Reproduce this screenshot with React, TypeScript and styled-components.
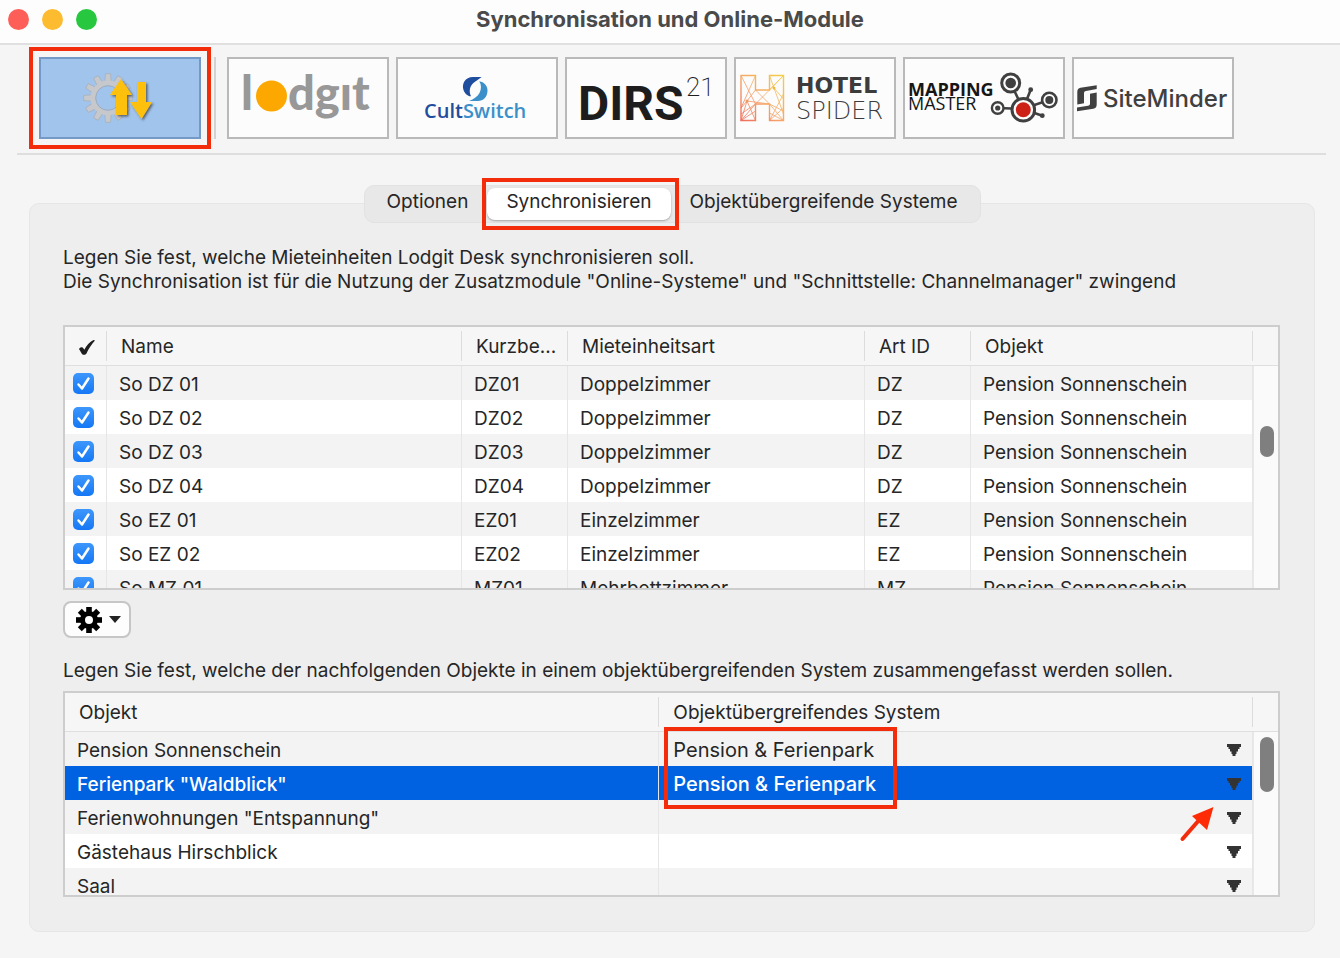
import React from "react";
import styled, { createGlobalStyle, css } from "styled-components";

const GlobalStyle = createGlobalStyle`
  *, *::before, *::after { box-sizing: border-box; }
  body {
    margin: 0;
    background: #f5f5f5;
    color: #262626;
    font-family: Inter, "Liberation Sans", sans-serif;
    font-size: 19px;
    line-height: 24px;
  }
  button, input, select { font: inherit; color: inherit; margin: 0; }
`;

const RED = "#f32d0c";

const Window = styled.main`
  min-height: 100vh;
  padding-bottom: 26px;
`;

const TitleBar = styled.header`
  display: grid;
  grid-template-columns: 1fr auto 1fr;
  align-items: center;
  height: 45px;
  padding: 0 8px 5px;
  background: #fdfdfd;
  border-bottom: 2px solid #e0e0e0;
`;

const Lights = styled.div`
  display: flex;
  gap: 13px;
`;

const Light = styled.button<{ $color: string }>`
  width: 21px;
  height: 21px;
  padding: 0;
  border: 0;
  border-radius: 50%;
  background: ${(p) => p.$color};
`;

const Title = styled.h1`
  margin: 0;
  font-size: 22px;
  line-height: 28px;
  font-weight: 700;
  color: #4a4a4a;
`;

const Toolbar = styled.nav`
  display: flex;
  gap: 7px;
  margin: 0 14px 0 17px;
  padding: 12px 0 14px 22px;
  border-bottom: 2px solid #dedede;
`;

const Divider = styled.span`
  width: 2px;
  margin: 0 4px 0 6px;
  background: #d2d2d2;
`;

const Marker = styled.span`
  position: absolute;
  z-index: 2;
  border: 4px solid ${RED};
  pointer-events: none;
`;

const ModuleMarker = styled(Marker)`
  inset: -12px;
`;

const TabMarker = styled(Marker)`
  inset: -10px -8px -10px -5px;
`;

const SystemMarker = styled(Marker)`
  top: -5px;
  left: 5px;
  width: 233px;
  height: 82px;
`;

const ModuleButton = styled.button<{ $active?: boolean }>`
  position: relative;
  flex: none;
  width: 162px;
  height: 82px;
  padding: 0;
  border: 2px solid ${(p) => (p.$active ? "#7599c6" : "#b9b9b9")};
  background: ${(p) => (p.$active ? "#a1c4ed" : "#fcfcfc")};

  > svg { display: block; }
`;

const TabView = styled.div`
  margin: 30px 25px 0 29px;
`;

const Tabs = styled.div`
  position: relative;
  z-index: 1;
  display: flex;
  width: max-content;
  height: 38px;
  margin: 0 auto -20px;
  padding: 2px 3px;
  border: 1px solid #e2e2e2;
  border-radius: 10px;
  background: #e8e8e8;
`;

const Tab = styled.button<{ $active?: boolean }>`
  position: relative;
  padding: 0 19px 4px;
  border: 0;
  border-radius: 8px;
  background: transparent;
  ${(p) =>
    p.$active &&
    css`
      background: #fff;
      box-shadow: 0 1px 2px rgba(0, 0, 0, 0.3);
    `}
`;

const Panel = styled.section`
  padding: 42px 34px 34px 33px;
  border: 1px solid #e6e6e6;
  border-radius: 10px;
  background: #eeeeee;
`;

const Note = styled.p<{ $gap: number }>`
  margin: 0 0 ${(p) => p.$gap}px;
`;

const TableBox = styled.div<{ $height: number }>`
  position: relative;
  height: ${(p) => p.$height}px;
  overflow: hidden;
  border: 2px solid #cdcdcd;
  background: #fff;
`;

const Grid = styled.table`
  width: 100%;
  table-layout: fixed;
  border-collapse: separate;
  border-spacing: 0;
`;

const Head = styled.th<{ $last?: boolean }>`
  height: 39px;
  padding: 0;
  border-bottom: 1px solid #dfdfdf;
  background: #f6f6f6;
  font-weight: 400;
  text-align: left;
  white-space: nowrap;

  > span {
    display: flex;
    align-items: center;
    height: 30px;
    padding: 2px 0 0 14px;
    border-right: ${(p) => (p.$last ? 0 : 1)}px solid #dcdcdc;
  }
`;

const Cell = styled.td`
  position: relative;
  height: 34px;
  padding: 3px 0 0 12px;
  border-right: 1px solid #e6e6e6;
  white-space: nowrap;
`;

const TickCell = styled(Cell)`
  padding: 0 0 0 8px;
`;

const SelectCell = styled(Cell)`
  padding: 0;
`;

const Row = styled.tr<{ $selected?: boolean }>`
  background: #fff;
  &:nth-child(odd) { background: #f3f3f3; }
  ${(p) =>
    p.$selected &&
    css`
      && { background: #0062e0; }
      color: #fff;
      font-weight: 500;
    `}
`;

const Track = styled.div`
  position: absolute;
  top: 39px;
  right: 0;
  bottom: 0;
  width: 25px;
  border-left: 1px solid #e8e8e8;
  background: #fafafa;
`;

const Thumb = styled.div<{ $top: number; $height: number }>`
  width: 14px;
  height: ${(p) => p.$height}px;
  margin: ${(p) => p.$top}px 0 0 6px;
  border-radius: 7px;
  background: #7f7f7f;
`;

const Tick = styled.label`
  display: grid;
  width: 21px;
  height: 21px;

  > * { grid-area: 1 / 1; }
  > svg { pointer-events: none; }
`;

const TickInput = styled.input`
  appearance: none;
  width: 21px;
  height: 21px;
  border-radius: 5px;
  background: linear-gradient(#3d97fb, #1577f5);
`;

const Picker = styled.label`
  display: grid;
  align-items: center;

  > * { grid-area: 1 / 1; }
  > svg { justify-self: end; margin: 2px 11px 0 0; pointer-events: none; }
`;

const PickerSelect = styled.select`
  appearance: none;
  width: 100%;
  height: 34px;
  padding: 2px 36px 0 14px;
  border: 0;
  border-radius: 0;
  background: transparent;
  font-size: 20px;
`;

const Pointer = styled.svg`
  position: absolute;
  top: 6px;
  right: 37px;
`;

const ActionButton = styled.button`
  display: flex;
  align-items: center;
  gap: 6px;
  height: 37px;
  margin: 11px 0 21px;
  padding: 0 7px 0 11px;
  border: 2px solid #c6c6c6;
  border-radius: 8px;
  background: #fdfdfd;
`;

const teeth = (n: number) => Array.from({ length: n }, (_, i) => (360 / n) * i);

const SyncIcon = () => (
  <svg width="158" height="78" viewBox="0 0 158 78" aria-hidden="true">
    <defs>
      <filter id="drop" x="-20%" y="-20%" width="150%" height="150%">
        <feDropShadow dx="1.5" dy="1.5" stdDeviation="1.3" floodColor="#333" floodOpacity="0.7" />
      </filter>
    </defs>
    <g transform="translate(67 39)">
      {teeth(12).map((a) => (
        <path key={a} d="M-3.2-16L-2.6-24.3H2.6L3.2-16z" fill="#c6c8cb" stroke="#a5adb8" strokeWidth=".7" transform={`rotate(${a})`} />
      ))}
      <circle r="15" fill="none" stroke="#c6c8cb" strokeWidth="5" />
      <circle r="12.3" fill="none" stroke="#9fabbb" strokeWidth="1" />
    </g>
    <g fill="#fdc00b" filter="url(#drop)">
      <path d="M80 20L91 36H86V56H75V36H69z" />
      <path d="M96 23H105V43H111L100.500 60L89 43H96z" />
    </g>
  </svg>
);

const LodgitLogo = () => (
  <svg width="158" height="78" viewBox="0 0 158 78" role="img" aria-label="lodgit">
    <g fill="#989898" fontFamily="Lato, sans-serif" fontWeight="900" fontSize="47">
      <text x="12" y="51">l</text>
      <text x="59" y="51">dgıt</text>
    </g>
    <circle cx="42.500" cy="37" r="15.500" fill="#fca800" />
  </svg>
);

const CultSwitchLogo = () => (
  <svg width="158" height="78" viewBox="0 0 158 78" role="img" aria-label="CultSwitch">
    <path d="M83.700 18H75C67 18 63.500 25 65.500 31C67 35 70 37.500 73 37.300C70.500 32 72 26.500 76 23.500z" fill="#1f4e9f" />
    <path d="M81.300 22.300C86 23 89.700 27 89.500 31.500C89.500 38 85 42 80 42H71C76 40 79.500 37.500 81.500 34C83.500 30 83.500 26 81.300 22.300z" fill="#3b90c9" />
    <text x="26" y="59" fontFamily="'Open Sans', sans-serif" fontWeight="600" fontSize="20">
      <tspan fill="#1f4e9f">Cult</tspan>
      <tspan fill="#3b90c9">Switch</tspan>
    </text>
  </svg>
);

const DirsLogo = () => (
  <svg width="158" height="78" viewBox="0 0 158 78" role="img" aria-label="DIRS 21">
    <g fill="#1d1d1d" fontFamily="Roboto, sans-serif">
      <text x="11" y="61" fontWeight="700" fontSize="48">DIRS</text>
      <text x="119" y="37" fontWeight="200" fontSize="26">21</text>
    </g>
  </svg>
);

const HotelSpiderLogo = () => (
  <svg width="158" height="78" viewBox="0 0 158 78" role="img" aria-label="Hotel Spider">
    <defs>
      <linearGradient id="web" x1="0" y1="1" x2="1" y2="0">
        <stop offset="0" stopColor="#ef6d5c" />
        <stop offset="0.5" stopColor="#f6a868" />
        <stop offset="1" stopColor="#f3cf45" />
      </linearGradient>
    </defs>
    <g fill="none" stroke="url(#web)">
      <path d="M5 16.500H19.500V31H33.500V16.500H47.500V61.500H33.500V45H19.500V61.500H5z" strokeWidth="1.400" />
      <path d="M5 16.500L19.500 45M19.500 16.500L5 49L11 42L19.500 31M5 61.500L11 42L19.500 61.500M5 61.500L19.500 45L33.500 31L47.500 16.500M5 55L19.500 45M5 61.500L19.500 52M19.500 31L33.500 45L47.500 61.500M33.500 16.500L38 29L47.500 40M47.500 16.500L33.500 31M38 29L47.500 55M11 42L33.500 45L47.500 52M33.500 61.500L47.500 35M33.500 54L47.500 61.500M33.500 61.500L47.500 49" strokeWidth=".8" />
    </g>
    <g fill="#f09a5a">
      <circle cx="11" cy="42" r="1.500" />
      <circle cx="38" cy="29" r="1.500" fill="#eebc3a" />
    </g>
    <g fill="#3c3c3c" fontFamily="'DejaVu Sans', sans-serif">
      <text x="60" y="34" fontWeight="700" fontSize="22">HOTEL</text>
      <text x="60" y="60" fontWeight="200" fontSize="24">SPIDER</text>
    </g>
  </svg>
);

const MappingMasterLogo = () => (
  <svg width="158" height="78" viewBox="0 0 158 78" role="img" aria-label="Mapping Master">
    <g fill="#161616" fontFamily="'Open Sans', sans-serif" fontSize="18">
      <text x="3" y="37" fontWeight="700">MAPPING</text>
      <text x="3" y="51">MASTER</text>
    </g>
    <g stroke="#404040" fill="none">
      <path d="M105.700 24L118 50L144 41M118 50L92.700 49M118 50L125.700 30.700M118 50L137.300 56.700" strokeWidth="2.600" />
      <g fill="#fcfcfc">
        <circle cx="118.300" cy="50.700" r="11.300" strokeWidth="3" />
        <circle cx="105.700" cy="24" r="9" strokeWidth="3" />
        <circle cx="92.700" cy="49" r="5.800" strokeWidth="2.400" />
        <circle cx="144.300" cy="41" r="7.200" strokeWidth="2.600" />
      </g>
    </g>
    <g fill="#404040">
      <circle cx="118.300" cy="50.700" r="7.500" fill="#cd2118" />
      <circle cx="105.700" cy="24" r="5.300" />
      <circle cx="92.700" cy="49" r="2.600" />
      <circle cx="144.300" cy="41" r="4" />
      <circle cx="125.700" cy="30.700" r="2.400" />
      <circle cx="137.300" cy="56.700" r="2.400" />
    </g>
  </svg>
);

const SiteMinderLogo = () => (
  <svg width="158" height="78" viewBox="0 0 158 78" role="img" aria-label="SiteMinder">
    <g fill="#404040">
      <path d="M3.300 45.500V33C3.300 30.500 4.500 29 6.500 28.700L22.700 26.300V30L12 31.900C10.500 32.200 10 33 10 34.200V44.300z" />
      <path d="M22.700 33.600V45.500C22.700 48 21.500 49.300 19.300 49.700L3 52.200V48.600L14 46.800C15.500 46.500 16 45.700 16 44.500V34.800z" />
      <text x="29" y="48" fontFamily="Inter, sans-serif" fontWeight="500" fontSize="24">SiteMinder</text>
    </g>
  </svg>
);

const modules = [LodgitLogo, CultSwitchLogo, DirsLogo, HotelSpiderLogo, MappingMasterLogo, SiteMinderLogo];

const DownArrow = () => (
  <svg width="14" height="12" viewBox="0 0 14 12" aria-hidden="true">
    <path d="M0 0H14V3H12.500V5H11V7.500H9.500V10H8.500V12H5.500V10H4.500V7.500H3V5H1.500V3H0z" fill="#333" />
  </svg>
);

const units = [
  ["So DZ 01", "DZ01", "Doppelzimmer", "DZ"],
  ["So DZ 02", "DZ02", "Doppelzimmer", "DZ"],
  ["So DZ 03", "DZ03", "Doppelzimmer", "DZ"],
  ["So DZ 04", "DZ04", "Doppelzimmer", "DZ"],
  ["So EZ 01", "EZ01", "Einzelzimmer", "EZ"],
  ["So EZ 02", "EZ02", "Einzelzimmer", "EZ"],
  ["So MZ 01", "MZ01", "Mehrbettzimmer", "MZ"],
];

const objects = [
  { name: "Pension Sonnenschein", system: "Pension & Ferienpark" },
  { name: 'Ferienpark "Waldblick"', system: "Pension & Ferienpark", selected: true },
  { name: 'Ferienwohnungen "Entspannung"', system: "" },
  { name: "Gästehaus Hirschblick", system: "" },
  { name: "Saal", system: "" },
];

const UnitTable = () => (
  <TableBox $height={265}>
    <Grid>
      <colgroup>
        <col width="42" />
        <col width="355" />
        <col width="106" />
        <col width="297" />
        <col width="106" />
        <col />
        <col width="25" />
      </colgroup>
      <thead>
        <tr>
          <Head scope="col">
            <span>
              <svg width="16" height="15" viewBox="0 0 16 15" role="img" aria-label="Aktiv">
                <path d="M0 9C1.200 7 3.600 6.800 4.500 8.400L5.300 9.800C7.500 5.500 10.500 1.800 14.500 0L16 .6C12.500 4.500 9.500 9 7.500 13.600C6.500 15.200 4 15.200 3 14z" fill="#1e1e1e" />
              </svg>
            </span>
          </Head>
          <Head scope="col"><span>Name</span></Head>
          <Head scope="col"><span>Kurzbe...</span></Head>
          <Head scope="col"><span>Mieteinheitsart</span></Head>
          <Head scope="col"><span>Art ID</span></Head>
          <Head scope="col"><span>Objekt</span></Head>
          <Head as="td" $last />
        </tr>
      </thead>
      <tbody>
        {units.map(([name, short, kind, id]) => (
          <Row key={name}>
            <TickCell>
              <Tick>
                <TickInput type="checkbox" defaultChecked aria-label={name} />
                <svg width="21" height="21" viewBox="0 0 21 21" aria-hidden="true">
                  <path d="M5.500 11.500L9 15.500L15.500 5.500" fill="none" stroke="#fff" strokeWidth="2.500" strokeLinecap="round" strokeLinejoin="round" />
                </svg>
              </Tick>
            </TickCell>
            <Cell>{name}</Cell>
            <Cell>{short}</Cell>
            <Cell>{kind}</Cell>
            <Cell>{id}</Cell>
            <Cell>Pension Sonnenschein</Cell>
            <td />
          </Row>
        ))}
      </tbody>
    </Grid>
    <Track><Thumb $top={60} $height={31} /></Track>
  </TableBox>
);

const ObjectTable = () => (
  <TableBox $height={206}>
    <Grid>
      <colgroup>
        <col width="49%" />
        <col />
        <col width="25" />
      </colgroup>
      <thead>
        <tr>
          <Head scope="col"><span>Objekt</span></Head>
          <Head scope="col"><span>Objektübergreifendes System</span></Head>
          <Head as="td" $last />
        </tr>
      </thead>
      <tbody>
        {objects.map((o, i) => (
          <Row key={o.name} $selected={o.selected}>
            <Cell>{o.name}</Cell>
            <SelectCell>
              <Picker>
                <PickerSelect defaultValue={o.system} aria-label={o.name}>
                  <option value=""></option>
                  <option>Pension &amp; Ferienpark</option>
                </PickerSelect>
                <DownArrow />
              </Picker>
              {i === 0 && <SystemMarker />}
              {i === 2 && (
                <Pointer width="36" height="36" viewBox="0 0 36 36" aria-hidden="true">
                  <path d="M3.500 33L21 13" stroke={RED} strokeWidth="4" strokeLinecap="round" />
                  <path d="M34.500 1L13 10L28 24z" fill="#ff2a06" />
                </Pointer>
              )}
            </SelectCell>
            <td />
          </Row>
        ))}
      </tbody>
    </Grid>
    <Track><Thumb $top={5} $height={55} /></Track>
  </TableBox>
);

export default function App() {
  return (
    <>
      <GlobalStyle />
      <Window>
        <TitleBar>
          <Lights>
            <Light $color="#fd5f58" aria-label="Schließen" />
            <Light $color="#fdbc2f" aria-label="Minimieren" />
            <Light $color="#27c840" aria-label="Vergrößern" />
          </Lights>
          <Title>Synchronisation und Online-Module</Title>
        </TitleBar>

        <Toolbar>
          <ModuleButton $active aria-label="Synchronisation">
            <SyncIcon />
            <ModuleMarker />
          </ModuleButton>
          <Divider />
          {modules.map((Logo, i) => (
            <ModuleButton key={i}><Logo /></ModuleButton>
          ))}
        </Toolbar>

        <TabView>
          <Tabs role="tablist">
            <Tab role="tab">Optionen</Tab>
            <Tab role="tab" $active aria-selected="true">
              Synchronisieren
              <TabMarker />
            </Tab>
            <Tab role="tab">Objektübergreifende Systeme</Tab>
          </Tabs>

          <Panel>
            <Note $gap={31}>
              Legen Sie fest, welche Mieteinheiten Lodgit Desk synchronisieren soll.
              <br />
              Die Synchronisation ist für die Nutzung der Zusatzmodule "Online-Systeme" und "Schnittstelle: Channelmanager" zwingend
            </Note>
            <UnitTable />
            <ActionButton aria-label="Aktionen">
              <svg width="26" height="26" viewBox="-13 -13 26 26" aria-hidden="true">
                {teeth(8).map((a) => (
                  <path key={a} d="M-2.800-7V-13H2.800V-7z" transform={`rotate(${a})`} />
                ))}
                <circle r="6.500" fill="none" stroke="#000" strokeWidth="5" />
              </svg>
              <svg width="14" height="7" viewBox="0 0 14 7" aria-hidden="true">
                <path d="M1 0H13L7 7z" fill="#222" />
              </svg>
            </ActionButton>
            <Note $gap={8}>
              Legen Sie fest, welche der nachfolgenden Objekte in einem objektübergreifenden System zusammengefasst werden sollen.
            </Note>
            <ObjectTable />
          </Panel>
        </TabView>
      </Window>
    </>
  );
}
